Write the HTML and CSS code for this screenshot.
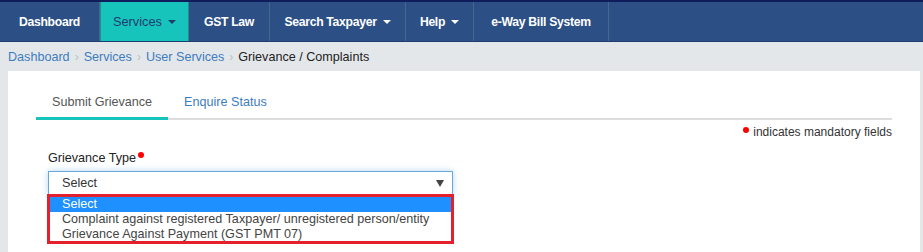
FILE: index.html
```html
<!DOCTYPE html>
<html>
<head>
<meta charset="utf-8">
<link rel="stylesheet" href="styles.css">
</head>
<body>
<div class="topband"></div>
<nav class="navbar">
  <a class="nav-item w-dash">Dashboard</a>
  <a class="nav-item active w-serv">Services <span class="caret"></span></a>
  <a class="nav-item w-law">GST Law</a>
  <a class="nav-item w-search">Search Taxpayer <span class="caret"></span></a>
  <a class="nav-item w-help">Help <span class="caret"></span></a>
  <a class="nav-item w-eway">e-Way Bill System</a>
</nav>
<div class="breadcrumb">
  <a class="crumb">Dashboard</a><span class="sep">›</span>
  <a class="crumb">Services</a><span class="sep">›</span>
  <a class="crumb">User Services</a><span class="sep">›</span>
  <span class="crumb-current">Grievance / Complaints</span>
</div>
<main class="panel">
  <div class="tabs">
    <a class="tab active">Submit Grievance</a>
    <a class="tab">Enquire Status</a>
  </div>
  <div class="mandatory"><span class="dot"></span>indicates mandatory fields</div>
  <div class="field">
    <label class="label">Grievance Type<span class="dot lbl-dot"></span></label>
    <div class="select">
      <span>Select</span>
      <span class="arrow"></span>
    </div>
    <div class="dropdown">
      <div class="option selected">Select</div>
      <div class="option">Complaint against registered Taxpayer/ unregistered person/entity</div>
      <div class="option last">Grievance Against Payment (GST PMT 07)</div>
    </div>
  </div>
</main>
</body>
</html>
```
FILE: styles.css
```css
html, body {
  margin: 0;
  padding: 0;
  background: #e4e7ea;
  font-family: "Liberation Sans", Arial, sans-serif;
  font-size: 12.6px;
  color: #333;
}
.topband {
  height: 2px;
  background: #0f1d5c;
}
.navbar {
  display: flex;
  height: 39px;
  background: #2c4f86;
  border-bottom: 1px solid #1f3c70;
}
.nav-item {
  display: flex;
  align-items: center;
  justify-content: center;
  color: #fff;
  font-weight: bold;
  font-size: 12.2px;
  letter-spacing: -0.3px;
  border-right: 1px solid #46658f;
  box-sizing: border-box;
}
.nav-item.active {
  background: #17c4bb;
  color: #1f3c70;
  font-weight: normal;
  font-size: 12.8px;
  letter-spacing: 0;
  border-left: 1px solid #1f8f8a;
  border-right: 1px solid #1f8f8a;
}
.w-dash { width: 100px; }
.w-serv { width: 89px; }
.w-law { width: 81px; }
.w-search { width: 136px; }
.w-help { width: 68px; }
.w-eway { width: 135px; }
.caret {
  display: inline-block;
  width: 0;
  height: 0;
  margin-left: 6px;
  border-left: 4px solid transparent;
  border-right: 4px solid transparent;
  border-top: 4px solid currentColor;
  vertical-align: middle;
}
.breadcrumb {
  height: 29px;
  display: flex;
  align-items: center;
  padding-left: 8px;
}
.crumb {
  color: #3e7cc0;
}
.sep {
  color: #b9bec4;
  margin: 0 5px;
  font-size: 12px;
}
.crumb-current {
  color: #222;
}
.panel {
  background: #fff;
  margin: 0 3px 0 8px;
  padding: 16px 28px 10px 28px;
}
.tabs {
  display: flex;
  border-bottom: 2px solid #ddd;
  height: 31px;
}
.tab {
  padding: 0 16px;
  line-height: 30px;
  color: #3e7cc0;
  margin-bottom: -2px;
}
.tab.active {
  color: #555;
  border-bottom: 3px solid #17c4bb;
}
.mandatory {
  text-align: right;
  font-size: 12px;
  color: #333;
  margin-top: 5px;
  height: 16px;
}
.dot {
  display: inline-block;
  width: 6px;
  height: 6px;
  border-radius: 50%;
  background: #f00;
  vertical-align: top;
  margin: 2px 4px 0 0;
}
.field {
  width: 405px;
  margin-left: 12px;
  margin-top: 10px;
}
.label {
  display: block;
  color: #222;
  height: 20px;
}
.lbl-dot {
  margin: 1px 0 0 2px;
}
.select {
  height: 24px;
  box-sizing: border-box;
  border: 1px solid #69a7dc;
  box-shadow: 0 0 6px rgba(102, 175, 233, 0.5);
  display: flex;
  align-items: center;
  justify-content: space-between;
  padding: 0 8px 0 13px;
  color: #333;
}
.arrow {
  width: 0;
  height: 0;
  border-left: 4px solid transparent;
  border-right: 4px solid transparent;
  border-top: 7px solid #444;
}
.dropdown {
  border: 3px solid #e3202c;
  margin: -1px -1px 0 -1px;
}
.option {
  height: 15px;
  line-height: 15px;
  padding-left: 12px;
  color: #444;
}
.option.last {
  height: 14px;
  line-height: 14px;
}
.option.selected {
  background: #1e90ff;
  color: #fff;
}
```
